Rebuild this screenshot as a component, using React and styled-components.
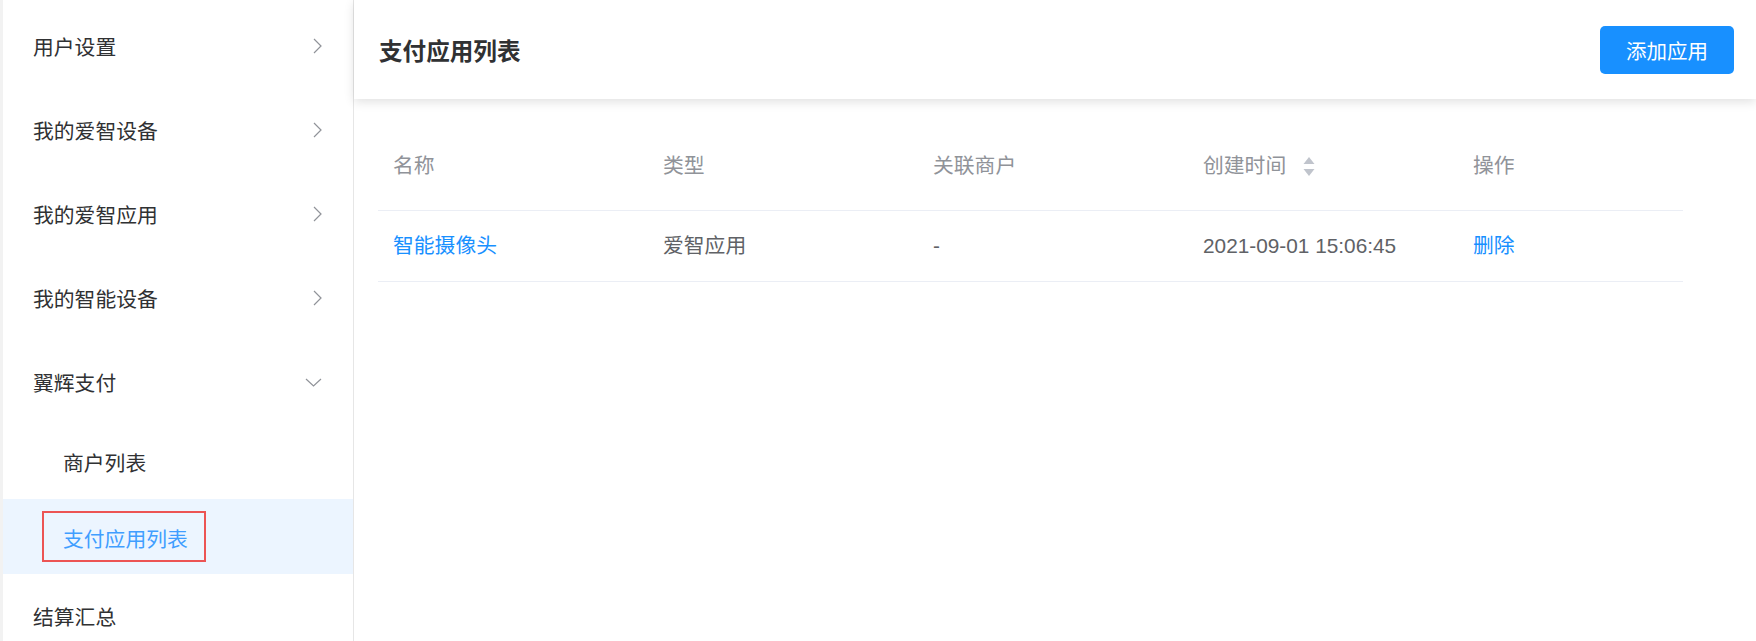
import React from 'react'
import styled, { createGlobalStyle } from 'styled-components'

const GlobalStyle = createGlobalStyle`
  html, body {
    margin: 0;
    padding: 0;
    background: #fff;
  }
  body {
    font-family: "Liberation Sans", "Noto Sans CJK SC", sans-serif;
  }
`

const Layout = styled.div`
  display: flex;
  height: 100vh;
  overflow: hidden;
`

const Sidebar = styled.aside`
  width: 350px;
  flex-shrink: 0;
  border-left: 3px solid #f2f2f2;
  border-right: 1px solid #e6e6e6;
  padding-top: 4px;
  background: #fff;
`

const MenuItem = styled.div`
  display: flex;
  align-items: center;
  justify-content: space-between;
  height: 84px;
  padding: 0 31px 0 30px;
  font-size: 20.8px;
  color: #303133;
`

const SubItem = styled.div`
  display: flex;
  align-items: center;
  height: 75px;
  padding-left: ${p => (p.$boxed ? '39px' : '60px')};
  font-size: 20.8px;
  color: ${p => (p.$active ? '#409eff' : '#303133')};
  background: ${p => (p.$active ? '#ecf5ff' : 'transparent')};
`

const Highlight = styled.span`
  display: inline-flex;
  align-items: center;
  height: 45px;
  padding: 2px 16px 0 19px;
  border: 2px solid #ec5454;
`

const Main = styled.main`
  flex: 1;
  display: flex;
  flex-direction: column;
  min-width: 0;
`

const Header = styled.header`
  display: flex;
  align-items: center;
  justify-content: space-between;
  height: 99px;
  padding: 0 22px 0 25px;
  box-shadow: 0 3px 10px rgba(0, 0, 0, 0.12);
  position: relative;
  z-index: 1;
`

const Title = styled.h1`
  margin: 0;
  font-size: 23.6px;
  font-weight: 700;
  color: #303133;
`

const Button = styled.button`
  height: 48px;
  width: 134px;
  border: none;
  border-radius: 5px;
  background: #1890ff;
  color: #fff;
  font-family: inherit;
  font-size: 20.5px;
`

const Content = styled.div`
  padding: 31px 73px 0 24px;
`

const Row = styled.div`
  display: grid;
  grid-template-columns: 270px 270px 270px 270px 1fr;
  border-bottom: 1px solid #ebeef5;
`

const HeadCell = styled.div`
  display: flex;
  align-items: center;
  padding: 20px 15px 28px;
  line-height: 32px;
  font-size: 20.8px;
  color: #909399;
`

const Cell = styled.div`
  padding: 19px 15px;
  line-height: 32px;
  font-size: 20.8px;
  color: ${p => (p.$link ? '#1890ff' : '#606266')};
`

const SortIcon = styled.svg`
  margin-left: 17px;
`

function ChevronRight() {
  return (
    <svg width="9" height="16" viewBox="0 0 9 16">
      <polyline points="1,1 8,8 1,15" fill="none" stroke="#909399" strokeWidth="1.2" />
    </svg>
  )
}

function ChevronDown() {
  return (
    <svg width="17" height="9" viewBox="0 0 17 9">
      <polyline points="1,1 8.5,8 16,1" fill="none" stroke="#909399" strokeWidth="1.2" />
    </svg>
  )
}

const menus = ['用户设置', '我的爱智设备', '我的爱智应用', '我的智能设备']

export default function App() {
  return (
    <>
      <GlobalStyle />
      <Layout>
        <Sidebar>
          {menus.map(m => (
            <MenuItem key={m}>
              <span>{m}</span>
              <ChevronRight />
            </MenuItem>
          ))}
          <MenuItem>
            <span>翼辉支付</span>
            <ChevronDown />
          </MenuItem>
          <SubItem>商户列表</SubItem>
          <SubItem $active $boxed>
            <Highlight>支付应用列表</Highlight>
          </SubItem>
          <MenuItem>
            <span>结算汇总</span>
          </MenuItem>
        </Sidebar>
        <Main>
          <Header>
            <Title>支付应用列表</Title>
            <Button>添加应用</Button>
          </Header>
          <Content>
            <Row>
              <HeadCell>名称</HeadCell>
              <HeadCell>类型</HeadCell>
              <HeadCell>关联商户</HeadCell>
              <HeadCell>
                创建时间
                <SortIcon width="12" height="20" viewBox="0 0 12 20">
                  <polygon points="6,1 11.5,8 0.5,8" fill="#c0c4cc" />
                  <polygon points="0.5,13 11.5,13 6,20" fill="#c0c4cc" />
                </SortIcon>
              </HeadCell>
              <HeadCell>操作</HeadCell>
            </Row>
            <Row>
              <Cell $link>智能摄像头</Cell>
              <Cell>爱智应用</Cell>
              <Cell>-</Cell>
              <Cell>2021-09-01 15:06:45</Cell>
              <Cell $link>删除</Cell>
            </Row>
          </Content>
        </Main>
      </Layout>
    </>
  )
}
